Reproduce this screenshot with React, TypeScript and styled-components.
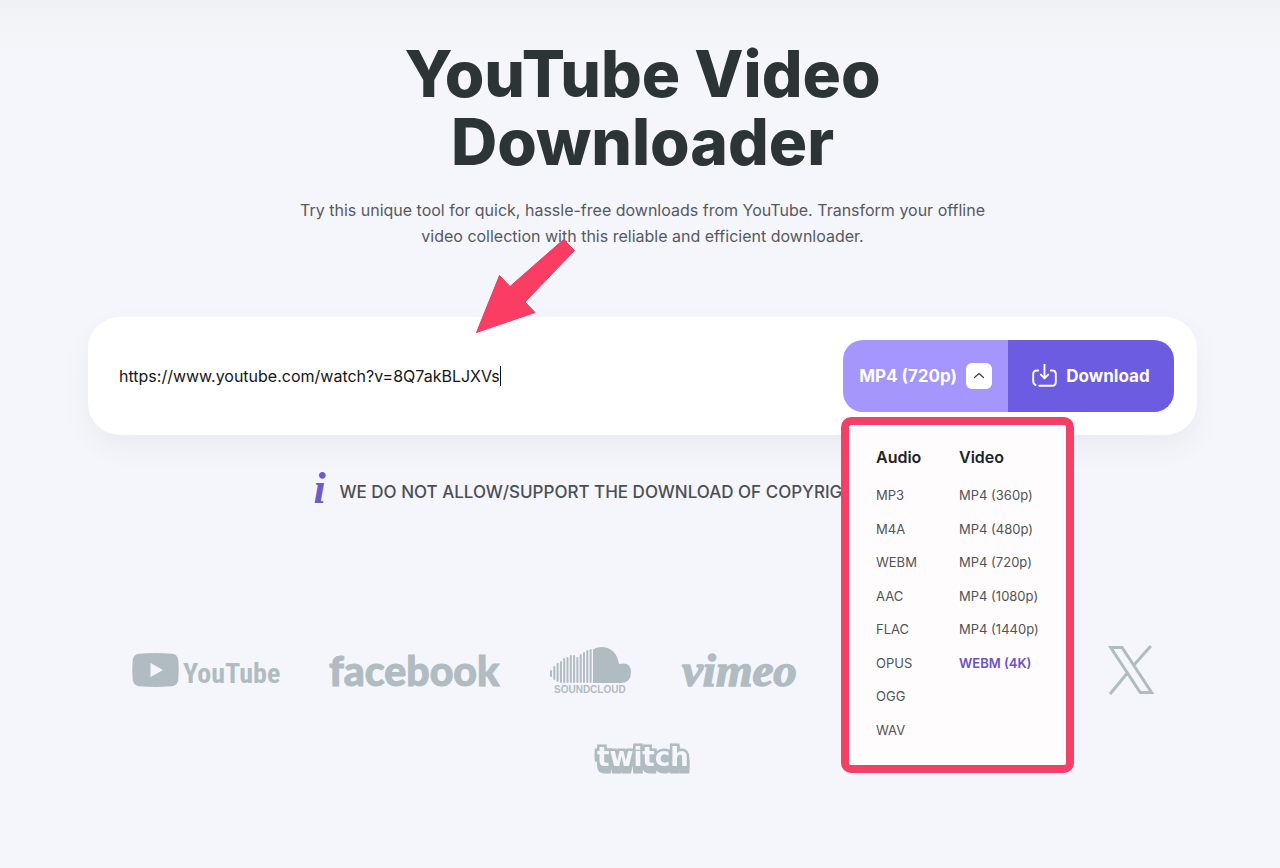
import React from "react";
import styled, { createGlobalStyle } from "styled-components";

const GlobalStyle = createGlobalStyle`
  *, *::before, *::after { box-sizing: border-box; }
  html { min-height: 100%; background: #f5f6fb; }
  body {
    margin: 0;
    font-family: Inter, "Liberation Sans", sans-serif;
    color: #2d3436;
  }
  button, input { font: inherit; color: inherit; }
  ul { list-style: none; margin: 0; padding: 0; }
`;

const Page = styled.main`
  display: flex;
  flex-direction: column;
  align-items: center;
  padding: 40px 83px 90px 88px;
  background: linear-gradient(#f0f0f5 0, #f3f4f8 24px, #f5f6fb 60px);
`;

const Title = styled.h1`
  max-width: 600px;
  margin: 0;
  font-size: 64px;
  line-height: 68px;
  font-weight: 800;
  text-align: center;
`;

const Intro = styled.p`
  max-width: 720px;
  margin: 21px 0 0;
  font-size: 16px;
  line-height: 26px;
  text-align: center;
  color: #55595c;
`;

const Card = styled.form`
  position: relative;
  display: flex;
  align-items: center;
  width: 100%;
  margin-top: 68px;
  padding: 23px 23px 23px 31px;
  border-radius: 32px;
  background: #fff;
  box-shadow: 0 12px 28px rgba(60, 60, 80, 0.06);
`;

const UrlField = styled.label`
  display: flex;
  align-items: center;
  flex: 1;
  min-width: 0;
  cursor: text;
`;

const UrlInput = styled.input`
  field-sizing: content;
  max-width: 100%;
  height: 32px;
  padding: 0;
  border: 0;
  outline: 0;
  background: none;
  font-size: 16px;
  color: #161616;
`;

const Caret = styled.span`
  width: 1px;
  height: 20px;
  background: #111;
`;

const Actions = styled.div`
  position: relative;
  display: grid;
  grid-template-columns: 165px 166px;
  height: 72px;
`;

const ActionButton = styled.button<{ $primary?: boolean }>`
  display: flex;
  align-items: center;
  justify-content: center;
  gap: 9px;
  padding: 0;
  border: 0;
  border-radius: ${(p) => (p.$primary ? "0 20px 20px 0" : "20px 0 0 20px")};
  background: ${(p) => (p.$primary ? "#6c5ce1" : "#a496fc")};
  color: #fff;
  font-size: 17px;
  font-weight: 700;
  cursor: pointer;
`;

const Toggle = styled.span`
  display: flex;
  align-items: center;
  justify-content: center;
  width: 26px;
  height: 26px;
  border-radius: 6px;
  background: #fff;
`;

const Menu = styled.div`
  position: absolute;
  z-index: 2;
  top: 77px;
  left: -2px;
  display: grid;
  grid-template-columns: 83px 1fr;
  width: 233px;
  height: 356px;
  padding: 21px 20px 13px 27px;
  border: 8px solid #f43f67;
  border-radius: 10px;
  background: #fffcfd;
`;

const MenuGroup = styled.section`
  display: flex;
  flex-direction: column;
`;

const MenuTitle = styled.h2`
  margin: 0 0 16px;
  font-size: 16px;
  line-height: 22px;
  font-weight: 600;
  color: #202426;
`;

const MenuList = styled.ul`
  display: grid;
  flex: 1;
  grid-template-rows: repeat(8, 1fr);
`;

const MenuItem = styled.button<{ $selected?: boolean }>`
  padding: 0;
  border: 0;
  background: none;
  font-size: 13px;
  line-height: 20px;
  font-weight: ${(p) => (p.$selected ? 600 : 400)};
  color: ${(p) => (p.$selected ? "#6c52c4" : "#505457")};
  text-align: left;
  white-space: nowrap;
  cursor: pointer;
`;

const Pointer = styled.svg`
  position: absolute;
  z-index: 3;
  top: -80px;
  left: 386px;
`;

const Notice = styled.p`
  display: flex;
  align-items: center;
  gap: 12px;
  width: 100%;
  max-width: 662px;
  height: 40px;
  margin: 37px 0 0;
  font-size: 17px;
  font-weight: 500;
  white-space: nowrap;
  color: #4b4f55;
`;

const InfoMark = styled.span`
  width: 16px;
  padding: 0 0 6px;
  font-family: "Liberation Serif", serif;
  font-size: 44px;
  line-height: 40px;
  font-style: italic;
  font-weight: 700;
  text-align: center;
  color: #6c5bcb;
`;

const Brands = styled.ul`
  display: flex;
  flex-wrap: wrap;
  justify-content: center;
  align-items: center;
  gap: 37px 50px;
  width: 100%;
  margin-top: 133px;
  color: #b1bcc2;
`;

const Brand = styled.li<{ $width: number }>`
  display: flex;
  align-items: center;
  justify-content: center;
  width: ${(p) => p.$width}px;
  height: 50px;

  svg { display: block; width: 100%; height: 50px; overflow: visible; }
`;

const TwitchMark = styled.svg`
  filter: drop-shadow(0 2px 0 #b1bcc2) drop-shadow(0 3px 0 #b1bcc2);
`;

const audioFormats = ["MP3", "M4A", "WEBM", "AAC", "FLAC", "OPUS", "OGG", "WAV"];
const videoFormats = [
  "MP4 (360p)",
  "MP4 (480p)",
  "MP4 (720p)",
  "MP4 (1080p)",
  "MP4 (1440p)",
  "WEBM (4K)",
];

function FormatGroup({ title, formats, selected }: { title: string; formats: string[]; selected?: string }) {
  return (
    <MenuGroup>
      <MenuTitle>{title}</MenuTitle>
      <MenuList>
        {formats.map((f) => (
          <li key={f}>
            <MenuItem type="button" $selected={f === selected}>{f}</MenuItem>
          </li>
        ))}
      </MenuList>
    </MenuGroup>
  );
}

const DownloadIcon = () => (
  <svg width="25" height="25" viewBox="0 0 25 25" fill="none" stroke="currentColor" strokeWidth="1.9" strokeLinecap="round" strokeLinejoin="round" aria-hidden="true">
    <path d="M12.500 -.8V14M8.800 10.600L12.500 14.400L16.200 10.600" />
    <path d="M6.200 6.500H5Q1.200 6.500 1.200 10V17Q1.200 20 3.600 21M18.800 6.500H20Q23.800 6.500 23.800 10V18Q23.800 21.800 20 21.800H7.300" />
  </svg>
);

/* Top and bottom edge of each bar of the sound wave, left to right. */
const soundBars = [
  [25, 32], [21, 35], [18, 37], [16, 38], [13, 38], [12, 38], [10, 38],
  [10, 38], [12, 38], [9, 38], [7, 38], [5, 38], [4, 38],
];

export default function App() {
  return (
    <>
      <GlobalStyle />
      <Page>
        <Title>YouTube Video Downloader</Title>
        <Intro>
          Try this unique tool for quick, hassle-free downloads from YouTube. Transform your offline
          video collection with this reliable and efficient downloader.
        </Intro>

        <Card onSubmit={(e) => e.preventDefault()}>
          <UrlField>
            <UrlInput
              type="text"
              aria-label="https://www.youtube.com/"
              defaultValue="https://www.youtube.com/watch?v=8Q7akBLJXVs"
            />
            <Caret />
          </UrlField>
          <Actions>
            <ActionButton type="button" aria-expanded="true">
              MP4 (720p)
              <Toggle>
                <svg width="10" height="8" viewBox="0 0 10 8" fill="none" stroke="#3a3f44" strokeWidth="1.2" strokeLinecap="round" strokeLinejoin="round" aria-hidden="true">
                  <path d="M.5 5.500L5 1.500L9.500 5.500" />
                </svg>
              </Toggle>
            </ActionButton>
            <ActionButton type="submit" $primary>
              <DownloadIcon />
              Download
            </ActionButton>
            <Menu>
              <FormatGroup title="Audio" formats={audioFormats} />
              <FormatGroup title="Video" formats={videoFormats} selected="WEBM (4K)" />
            </Menu>
          </Actions>
          <Pointer width="104" height="100" viewBox="0 0 104 100" fill="#fb3d63" stroke="#e93c62" strokeLinejoin="round" aria-hidden="true">
            <path d="M2.500 95.500L25.500 38.500L36 49.500L89.500 2.500L100.500 13.500L51 65L61 75.500Z" />
          </Pointer>
        </Card>

        <Notice>
          <InfoMark aria-hidden="true">i</InfoMark>
          WE DO NOT ALLOW/SUPPORT THE DOWNLOAD OF COPYRIGH
        </Notice>

        <Brands>
          <Brand $width={148}>
            <svg viewBox="0 0 148 50" fill="currentColor">
              <path fillRule="evenodd" d="M7 8.700Q23 7.300 40 8.700Q45.500 9.200 46.300 15Q47.200 25 46.300 35Q45.500 40.500 40 41.200Q23 42.600 7 41.200Q1.600 40.500.7 35Q-.2 25 .7 15Q1.600 9.200 7 8.700ZM18.500 18V32L31 25Z" />
              <text x="51" y="38" fontFamily="'Liberation Sans Narrow', 'Roboto Condensed', 'Open Sans Condensed', Roboto, sans-serif" fontWeight="700" fontSize="28">YouTube</text>
            </svg>
          </Brand>
          <Brand $width={170}>
            <svg viewBox="0 0 170 50" fill="currentColor" stroke="currentColor">
              <text x="-1" y="41" fontFamily="Lato, sans-serif" fontWeight="900" fontSize="41">facebook</text>
            </svg>
          </Brand>
          <Brand $width={81}>
            <svg viewBox="0 0 81 50" fill="currentColor">
              {soundBars.map(([top, bottom], i) => (
                <rect key={i} x={i * 3.300} y={top} width="2" height={bottom - top} rx="1" />
              ))}
              <path d="M43 4.500Q46 2 51 2Q66 2 69 19Q81 16 81 27.500Q81 38 71 38H43Z" />
              <text x="4" y="48" fontFamily="'Liberation Sans', sans-serif" fontWeight="700" fontSize="10">SOUNDCLOUD</text>
            </svg>
          </Brand>
          <Brand $width={116}>
            <svg viewBox="0 0 116 50" fill="currentColor">
              <text x="1" y="41" fontFamily="'Liberation Serif', serif" fontStyle="italic" fontWeight="700" fontSize="47" stroke="currentColor" strokeWidth="1.5">vimeo</text>
            </svg>
          </Brand>
          <Brand $width={211} aria-hidden="true" />
          <Brand $width={46}>
            <svg viewBox="0 0 46 50" fill="none" stroke="currentColor" strokeWidth="3">
              <path d="M2.700 2.500H14L43.600 47.500H32.300ZM42.800 1L25.500 20.600M20 27.200L2 49" />
            </svg>
          </Brand>
          <Brand $width={96}>
            <TwitchMark viewBox="0 0 96 50">
              <text x="2" y="34" fontFamily="'DejaVu Sans', sans-serif" fontWeight="700" fontSize="26" fill="#f5f6fb" stroke="#b1bcc2" strokeWidth="5" paintOrder="stroke">twitch</text>
            </TwitchMark>
          </Brand>
        </Brands>
      </Page>
    </>
  );
}
